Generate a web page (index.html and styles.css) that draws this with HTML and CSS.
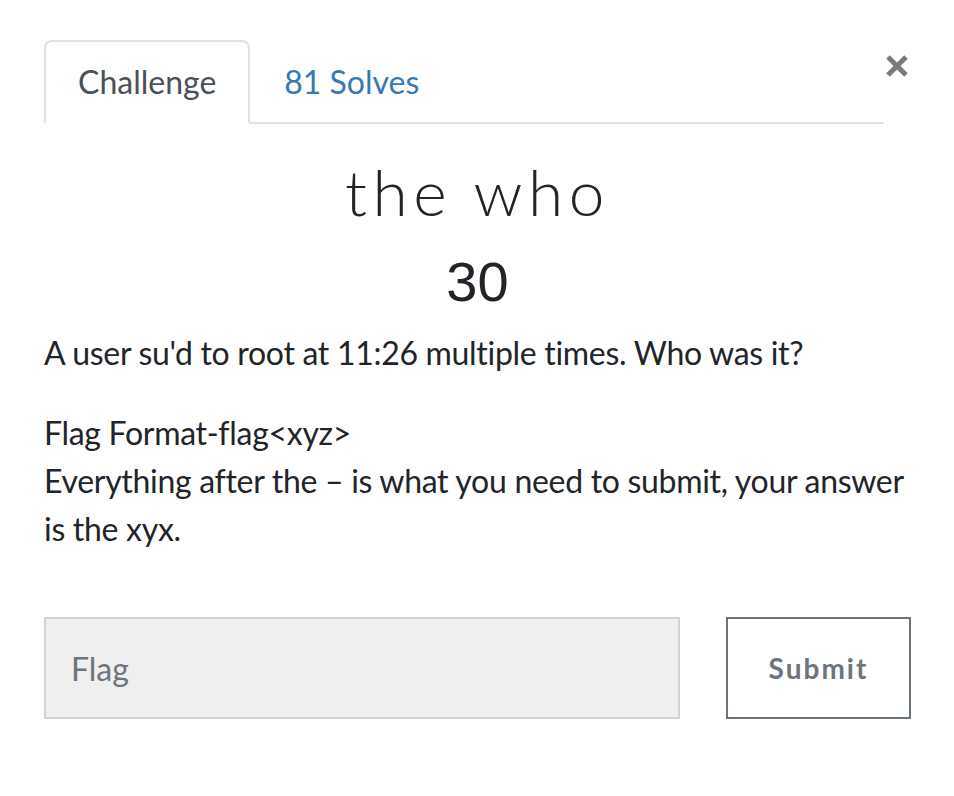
FILE: index.html
```html
<!DOCTYPE html>
<html>
<head>
<meta charset="utf-8">
<link rel="stylesheet" href="styles.css">
</head>
<body>
<div class="modal">
  <div class="head">
    <ul class="tabs">
      <li class="tab active">Challenge</li>
      <li class="tab">81 Solves</li>
    </ul>
    <button class="close" aria-label="Close">
      <svg width="22" height="22" viewBox="0 0 22 22"><path d="M2 2L20 20M20 2L2 20" stroke="#7a7a7a" stroke-width="5"/></svg>
    </button>
  </div>
  <div class="body">
    <h2 class="name">the who</h2>
    <h3 class="value">30</h3>
    <div class="desc">
      <p>A user su'd to root at 11:26 multiple times. Who was it?</p>
      <p>Flag Format-flag&lt;xyz&gt;<br>Everything after the – is what you need to submit, your answer is the xyx.</p>
    </div>
    <div class="submit-row">
      <input class="flag" type="text" placeholder="Flag">
      <button class="submit">Submit</button>
    </div>
  </div>
</div>
</body>
</html>
```

FILE: styles.css
```css
html, body {
  margin: 0;
  padding: 0;
  background: #fff;
}
body {
  font-family: "Lato", "Open Sans", sans-serif;
  color: #212529;
  font-variant-ligatures: none;
}
.modal {
  width: 954px;
  box-sizing: border-box;
  padding: 40px 43px 0 44px;
}
.head {
  display: flex;
  align-items: flex-start;
}
.tabs {
  flex: 1;
  display: flex;
  list-style: none;
  margin: 0;
  padding: 0;
  border-bottom: 2px solid #dee2e6;
}
.tab {
  font-size: 32px;
  line-height: 48px;
  padding: 16px 32px;
  border: 2px solid transparent;
  border-radius: 8px 8px 0 0;
  margin-bottom: -2px;
  color: #337ab7;
}
.tab.active {
  color: #495057;
  background: #fff;
  border-color: #dee2e6 #dee2e6 #fff;
}
.close {
  width: 27px;
  border: 0;
  background: none;
  padding: 15px 0 0 2px;
  margin: 0;
  display: flex;
  justify-content: flex-start;
}
.close svg {
  display: block;
}
.name {
  font-family: "Lato", sans-serif;
  font-weight: 300;
  font-size: 64px;
  line-height: 76px;
  letter-spacing: 5.5px;
  text-align: center;
  margin: 30px 0 18px;
}
.value {
  font-family: "Liberation Sans", Arial, sans-serif;
  font-weight: 400;
  font-size: 56px;
  line-height: 67px;
  text-align: center;
  margin: 0 0 14px;
}
.desc p {
  font-size: 32px;
  line-height: 48px;
  letter-spacing: -0.3px;
  margin: 0 0 32px;
}
.submit-row {
  display: flex;
  gap: 46px;
  margin-top: 64px;
}
.flag {
  flex: 0 0 636px;
  box-sizing: border-box;
  height: 102px;
  background: #efefef;
  border: 2px solid #ced4da;
  border-radius: 0;
  padding: 0 25px;
  font-family: "Lato", sans-serif;
  font-size: 32px;
  color: #495057;
  outline: none;
}
.flag::placeholder {
  color: #6c757d;
}
.submit {
  flex: 1;
  box-sizing: border-box;
  height: 102px;
  background: #fff;
  border: 2px solid #6c757d;
  border-radius: 0;
  font-family: "Lato", sans-serif;
  font-weight: 700;
  font-size: 28px;
  letter-spacing: 2px;
  color: #6c757d;
}
```
